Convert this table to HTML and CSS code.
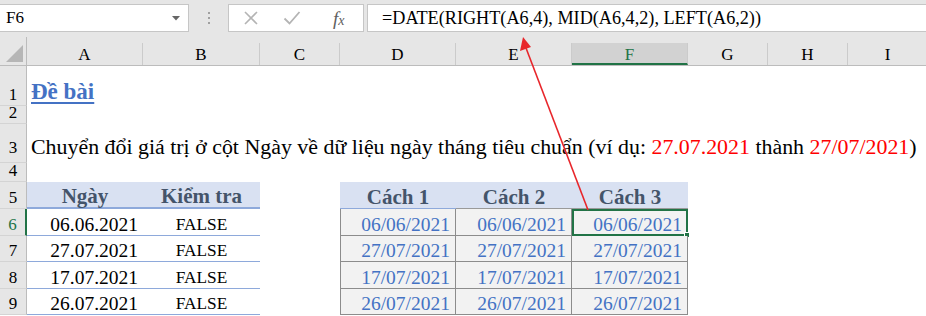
FILE: index.html
```html
<!DOCTYPE html>
<html lang="vi">
<head>
<meta charset="utf-8">
<title>Excel DATE</title>
<link rel="stylesheet" href="styles.css">
</head>
<body>
<div class="app">
  <div class="toolbar">
    <div class="namebox"><span class="nb-text">F6</span>
      <svg class="nb-drop" width="8" height="5" viewBox="0 0 8 5"><path d="M0 0H8L4 4.5Z" fill="#666"/></svg>
    </div>
    <div class="grip"><i></i><i></i><i></i></div>
    <div class="fxbox">
      <svg class="ico" width="16" height="16" viewBox="0 0 16 16"><path d="M2 2L14 14M14 2L2 14" stroke="#b4b4b4" stroke-width="1.6" fill="none"/></svg>
      <svg class="ico" width="18" height="16" viewBox="0 0 18 16"><path d="M1.5 8.5L6.5 13.5L16.5 2" stroke="#b4b4b4" stroke-width="1.8" fill="none"/></svg>
      <span class="fx">f<sub>x</sub></span>
    </div>
    <div class="formula"><span class="txt">=DATE(RIGHT(A6,4), MID(A6,4,2), LEFT(A6,2))</span></div>
  </div>

  <div class="sheet">
    <div class="corner"><svg width="17" height="17" viewBox="0 0 17 17"><path d="M17 0V17H0Z" fill="#b6b6b6"/></svg></div>
    <div class="ch"><span class="txt">A</span></div>
    <div class="ch"><span class="txt">B</span></div>
    <div class="ch"><span class="txt">C</span></div>
    <div class="ch"><span class="txt">D</span></div>
    <div class="ch"><span class="txt">E</span></div>
    <div class="ch sel"><span class="txt">F</span></div>
    <div class="ch"><span class="txt">G</span></div>
    <div class="ch"><span class="txt">H</span></div>
    <div class="ch"><span class="txt">I</span></div>

    <div class="rh"><span class="txt">1</span></div>
    <div class="c title"><span class="txt">Đề bài</span></div>
    <div class="c"></div><div class="c"></div><div class="c"></div><div class="c"></div><div class="c"></div><div class="c"></div><div class="c"></div><div class="c"></div>

    <div class="rh"><span class="txt">2</span></div>
    <div class="c"></div><div class="c"></div><div class="c"></div><div class="c"></div><div class="c"></div><div class="c"></div><div class="c"></div><div class="c"></div><div class="c"></div>

    <div class="rh r3"><span class="txt">3</span></div>
    <div class="c desc"><span class="txt">Chuyển đổi giá trị ở cột Ngày về dữ liệu ngày tháng tiêu chuẩn (ví dụ: <span class="red">27.07.2021</span> thành <span class="red">27/07/2021</span>)</span></div>

    <div class="rh"><span class="txt">4</span></div>
    <div class="c"></div><div class="c"></div><div class="c"></div><div class="c"></div><div class="c"></div><div class="c"></div><div class="c"></div><div class="c"></div><div class="c"></div>

    <div class="rh"><span class="txt">5</span></div>
    <div class="c th1"><span class="txt">Ngày</span></div>
    <div class="c th1"><span class="txt">Kiểm tra</span></div>
    <div class="c"></div>
    <div class="c th2 first"><span class="txt">Cách 1</span></div>
    <div class="c th2"><span class="txt">Cách 2</span></div>
    <div class="c th2"><span class="txt">Cách 3</span></div>
    <div class="c"></div><div class="c"></div><div class="c"></div>

    <div class="rh act"><span class="txt">6</span></div>
    <div class="c d1"><span class="txt">06.06.2021</span></div>
    <div class="c b1"><span class="txt">FALSE</span></div>
    <div class="c"></div>
    <div class="c d2 first"><span class="txt">06/06/2021</span></div>
    <div class="c d2"><span class="txt">06/06/2021</span></div>
    <div class="c d2 active"><span class="txt">06/06/2021</span><i class="handle"></i></div>
    <div class="c"></div><div class="c"></div><div class="c"></div>

    <div class="rh"><span class="txt">7</span></div>
    <div class="c d1"><span class="txt">27.07.2021</span></div>
    <div class="c b1"><span class="txt">FALSE</span></div>
    <div class="c"></div>
    <div class="c d2 first"><span class="txt">27/07/2021</span></div>
    <div class="c d2"><span class="txt">27/07/2021</span></div>
    <div class="c d2"><span class="txt">27/07/2021</span></div>
    <div class="c"></div><div class="c"></div><div class="c"></div>

    <div class="rh"><span class="txt">8</span></div>
    <div class="c d1"><span class="txt">17.07.2021</span></div>
    <div class="c b1"><span class="txt">FALSE</span></div>
    <div class="c"></div>
    <div class="c d2 first"><span class="txt">17/07/2021</span></div>
    <div class="c d2"><span class="txt">17/07/2021</span></div>
    <div class="c d2"><span class="txt">17/07/2021</span></div>
    <div class="c"></div><div class="c"></div><div class="c"></div>

    <div class="rh"><span class="txt">9</span></div>
    <div class="c d1"><span class="txt">26.07.2021</span></div>
    <div class="c b1"><span class="txt">FALSE</span></div>
    <div class="c"></div>
    <div class="c d2 first"><span class="txt">26/07/2021</span></div>
    <div class="c d2"><span class="txt">26/07/2021</span></div>
    <div class="c d2"><span class="txt">26/07/2021</span></div>
    <div class="c"></div><div class="c"></div><div class="c"></div>
  </div>

  <svg class="arrow" width="926" height="316" viewBox="0 0 926 316">
    <line x1="588" y1="210" x2="526" y2="48" stroke="#e8262b" stroke-width="1.6"/>
    <path d="M523 37L520 51L531 47Z" fill="#e8262b"/>
  </svg>
</div>
</body>
</html>
```

FILE: styles.css
```css
* { box-sizing: border-box; }
html, body { margin: 0; padding: 0; background: #fff; }
body, .app, .txt, .c, .rh, .ch, .namebox, .formula {
  font-family: "Liberation Serif", "DejaVu Serif", serif;
}
body { color: #000; }

.app {
  position: relative;
  width: 926px;
  height: 316px;
  overflow: hidden;
  background: #fff;
}

/* ---------- formula bar ---------- */
.toolbar {
  height: 37px;
  background: #e6e6e6;
  display: flex;
  align-items: flex-start;
  padding-top: 4px;
}
.namebox {
  width: 189px;
  height: 28px;
  background: #fff;
  border: 1px solid #c6c6c6;
  border-left: none;
  display: flex;
  align-items: center;
  justify-content: space-between;
  padding: 0 8px 0 6px;
}
.nb-text { font-size: 17px; }
.nb-drop { margin-top: 1px; }
.grip {
  width: 39px;
  height: 28px;
  display: flex;
  flex-direction: column;
  align-items: center;
  justify-content: center;
  gap: 3px;
}
.grip i {
  display: block;
  width: 2px;
  height: 2px;
  background: #a0a0a0;
}
.fxbox {
  width: 136px;
  height: 28px;
  background: #fff;
  border: 1px solid #c6c6c6;
  display: flex;
  align-items: center;
  padding-left: 14px;
  gap: 24px;
}
.fx {
  font-family: "Liberation Serif", serif;
  font-style: italic;
  font-size: 19px;
  color: #606060;
  margin-left: 8px;
  line-height: 1;
}
.fx sub { font-size: 14px; vertical-align: 0; }
.formula {
  flex: 1;
  height: 28px;
  margin-left: 3px;
  background: #fff;
  border: 1px solid #c6c6c6;
  border-right: none;
  font-size: 18.2px;
  line-height: 26px;
  padding-left: 14px;
  white-space: nowrap;
}

/* ---------- grid ---------- */
.sheet {
  display: grid;
  grid-template-columns: 27px 116px 117px 80px 116px 116px 116px 80px 80px 80px;
  grid-template-rows: 29px 40px 18px 39px 19px 27px 27px 26px 27px 26px;
}
.corner {
  background: #e6e6e6;
  border-right: 1px solid #bcbcbc;
  border-bottom: 1px solid #bcbcbc;
  display: flex;
  align-items: flex-end;
  justify-content: flex-end;
  padding: 0 3px 3px 0;
}
.ch {
  background: #e6e6e6;
  border-bottom: 1px solid #bcbcbc;
  display: flex;
  align-items: flex-end;
}
.ch .txt {
  flex: 1;
  height: 22px;
  border-right: 1px solid #cbcbcb;
  text-align: center;
  font-size: 17px;
  line-height: 24px;
}
.ch.sel .txt {
  background: #d2d2d2;
  color: #217346;
  border-bottom: 2px solid #217346;
  line-height: 23px;
}
.rh {
  background: #e6e6e6;
  border-right: 1px solid #bcbcbc;
  border-bottom: 1px solid #d4d4d4;
  display: flex;
  align-items: flex-end;
  justify-content: center;
  font-size: 17px;
  line-height: 20px;
}
.rh.r3 { padding-bottom: 4px; }
.rh.act {
  color: #217346;
  border-right: 2px solid #217346;
}

.c {
  display: flex;
  align-items: flex-end;
  white-space: nowrap;
  min-width: 0;
}
.title {
  padding: 0 0 1px 4px;
}
.title .txt {
  font-size: 23px;
  font-weight: bold;
  color: #4472c4;
  text-decoration: underline;
  text-underline-offset: 3px;
  text-decoration-thickness: 2px;
  line-height: 26px;
}
.desc {
  grid-column: 2 / span 9;
  font-size: 21.9px;
  padding: 0 0 3px 4px;
  line-height: 26px;
}
.red { color: #ff0000; }

.th1, .th2 {
  background: #d9e1f2;
  justify-content: center;
  font-weight: bold;
  font-size: 21px;
  color: #44546a;
  line-height: 22px;
}
.th1 { border-bottom: 2px solid #8ea9db; }
.th2 { border-bottom: 1px solid #9a9a9a; }
.th2.first { border-bottom-color: #8ea9db; }

.d1 {
  justify-content: flex-end;
  padding: 0 5px 0 0;
  font-size: 19.5px;
  line-height: 20px;
  border-bottom: 1px solid #8ea9db;
}
.b1 {
  justify-content: center;
  padding-bottom: 0;
  font-size: 17.3px;
  line-height: 20px;
  border-bottom: 1px solid #8ea9db;
}
.d2 {
  position: relative;
  justify-content: flex-end;
  padding: 0 5px 0 0;
  background: #f2f2f2;
  color: #4472c4;
  font-size: 19.5px;
  line-height: 20px;
  border-right: 1px solid #8c8c8c;
  border-bottom: 1px solid #8c8c8c;
}
.d2.first { border-left: 1px solid #8c8c8c; }
.d2.active {
  border: 2px solid #217346;
  padding: 0 4px 0 0;
  line-height: 19px;
}
.handle {
  position: absolute;
  right: -4px;
  bottom: -4px;
  width: 6px;
  height: 6px;
  background: #217346;
  border: 1px solid #fff;
}

.arrow {
  position: absolute;
  left: 0;
  top: 0;
  pointer-events: none;
}
```
